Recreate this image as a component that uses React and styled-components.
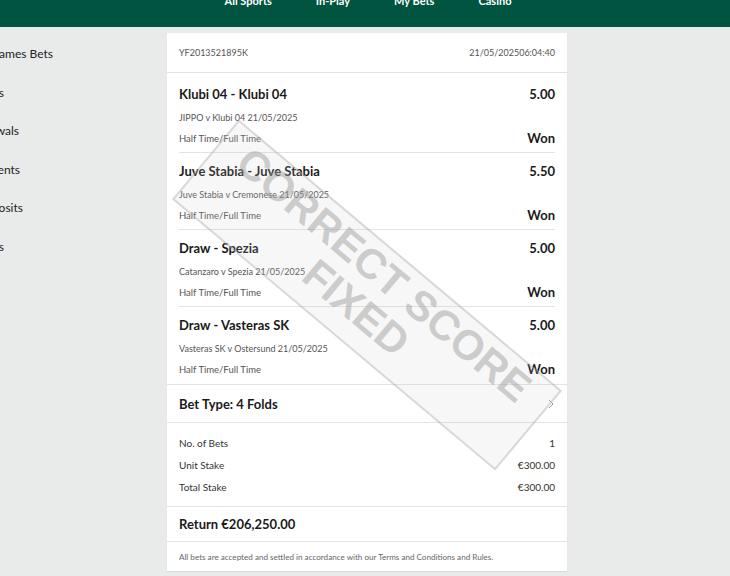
import React from "react";
import styled, { createGlobalStyle } from "styled-components";

const GlobalStyle = createGlobalStyle`
  html, body {
    margin: 0;
    padding: 0;
    background: #e9ebeb;
    font-family: Lato, "Open Sans", Arial, sans-serif;
    color: #222;
  }
`;

const Page = styled.div`
  width: 730px;
  height: 576px;
  overflow: hidden;
  background: #e9ebeb;
`;

const Header = styled.header`
  height: 27px;
  background: #005440;
  display: grid;
  grid-template-columns: 167px 400px 1fr;
  overflow: hidden;
`;

const Nav = styled.nav`
  grid-column: 2;
  display: flex;
  justify-content: center;
  gap: 44px;
  margin-top: -6px;
  padding-left: 2px;
`;

const NavLink = styled.span`
  color: #fff;
  font-weight: 700;
  font-size: 11px;
  line-height: 14px;
  white-space: nowrap;
`;

const Main = styled.div`
  display: grid;
  grid-template-columns: 167px 400px 1fr;
  padding-top: 6px;
`;

const Sidebar = styled.aside`
  overflow: hidden;
  padding-top: 14px;
  display: flex;
  flex-direction: column;
  gap: 24.5px;
`;

const SideItem = styled.div`
  width: ${(p) => p.$end}px;
  display: flex;
  justify-content: flex-end;
  font-size: 12px;
  line-height: 14px;
  color: #222;
  white-space: nowrap;
`;

const Card = styled.section`
  position: relative;
  background: #fff;
  box-shadow: 0 1px 1px rgba(0, 0, 0, 0.06);
  overflow: hidden;
`;

const CardHead = styled.div`
  height: 39px;
  padding: 0 12px;
  display: flex;
  align-items: center;
  justify-content: space-between;
  border-bottom: 1px solid #e3e3e3;
  font-size: 9px;
  color: #555;
`;

const Selections = styled.div`
  padding: 3px 12px 0;
  border-bottom: 1px solid #e3e3e3;
`;

const Selection = styled.div`
  padding-top: 11px;
  box-sizing: border-box;
  border-bottom: ${(p) => (p.$last ? "none" : "1px solid #e3e3e3")};
  height: ${(p) => (p.$last ? "77px" : "77px")};
`;

const Line = styled.div`
  display: flex;
  justify-content: space-between;
  align-items: center;
  height: 14px;
`;

const SubLine = styled(Line)`
  margin-top: ${(p) => p.$gap}px;
`;

const Title = styled.span`
  font-weight: 700;
  font-size: 13px;
  color: #1a1a1a;
`;

const Small = styled.span`
  font-size: ${(p) => p.$size || 9.5}px;
  color: #555;
`;

const BetType = styled.div`
  height: 37px;
  padding: 0 12px;
  display: flex;
  align-items: center;
  justify-content: space-between;
  border-bottom: 1px solid #e3e3e3;
`;

const Chevron = styled.svg`
  width: 8px;
  height: 10px;
`;

const Summary = styled.div`
  padding: 13px 12px 12px;
  display: flex;
  flex-direction: column;
  gap: 8px;
  border-bottom: 1px solid #e3e3e3;
`;

const SumRow = styled.div`
  display: flex;
  justify-content: space-between;
  align-items: center;
  height: 14px;
  font-size: 10px;
  color: #333;
`;

const Return = styled.div`
  height: 34px;
  padding: 0 12px;
  display: flex;
  align-items: center;
  border-bottom: 1px solid #e3e3e3;
`;

const Footer = styled.div`
  height: 29px;
  padding: 0 12px;
  display: flex;
  align-items: center;
  font-size: 8.1px;
  color: #666;
`;

const Stamp = styled.div`
  position: absolute;
  left: 200px;
  top: 262px;
  width: 422px;
  height: 104px;
  transform: translate(-50%, -50%) rotate(40deg);
  border: 2px solid rgba(170, 170, 170, 0.4);
  background: rgba(200, 200, 200, 0.15);
  display: flex;
  flex-direction: column;
  align-items: center;
  justify-content: center;
  padding-bottom: 10px;
  box-sizing: border-box;
  pointer-events: none;
`;

const StampText = styled.div`
  font-family: "Liberation Sans", Arial, sans-serif;
  font-weight: 700;
  font-size: 42px;
  line-height: 43px;
  color: rgba(150, 150, 150, 0.45);
  white-space: nowrap;
`;

const sideItems = [
  { label: "Casino Games Bets", end: 53 },
  { label: "Statements", end: 4 },
  { label: "Withdrawals", end: 19 },
  { label: "Adjustments", end: 20 },
  { label: "Deposits", end: 23 },
  { label: "Settings", end: 4 },
];

const selections = [
  { pick: "Klubi 04 - Klubi 04", odds: "5.00", event: "JIPPO v Klubi 04 21/05/2025" },
  { pick: "Juve Stabia - Juve Stabia", odds: "5.50", event: "Juve Stabia v Cremonese 21/05/2025" },
  { pick: "Draw - Spezia", odds: "5.00", event: "Catanzaro v Spezia 21/05/2025" },
  { pick: "Draw - Vasteras SK", odds: "5.00", event: "Vasteras SK v Ostersund 21/05/2025" },
];

export default function App() {
  return (
    <Page>
      <GlobalStyle />
      <Header>
        <Nav>
          <NavLink>All Sports</NavLink>
          <NavLink>In-Play</NavLink>
          <NavLink>My Bets</NavLink>
          <NavLink>Casino</NavLink>
        </Nav>
      </Header>
      <Main>
        <Sidebar>
          {sideItems.map((it) => (
            <SideItem key={it.label} $end={it.end}>
              <span>{it.label}</span>
            </SideItem>
          ))}
        </Sidebar>
        <Card>
          <CardHead>
            <span>YF2013521895K</span>
            <span>21/05/202506:04:40</span>
          </CardHead>
          <Selections>
            {selections.map((s, i) => (
              <Selection key={s.pick} $last={i === selections.length - 1}>
                <Line>
                  <Title>{s.pick}</Title>
                  <Title>{s.odds}</Title>
                </Line>
                <SubLine $gap={9}>
                  <Small $size={9}>{s.event}</Small>
                </SubLine>
                <SubLine $gap={7}>
                  <Small>Half Time/Full Time</Small>
                  <Title>Won</Title>
                </SubLine>
              </Selection>
            ))}
          </Selections>
          <BetType>
            <Title>Bet Type: 4 Folds</Title>
            <Chevron viewBox="0 0 8 10">
              <path d="M2 1l4 4-4 4" fill="none" stroke="#999" strokeWidth="1" />
            </Chevron>
          </BetType>
          <Summary>
            <SumRow>
              <span>No. of Bets</span>
              <span>1</span>
            </SumRow>
            <SumRow>
              <span>Unit Stake</span>
              <span>€300.00</span>
            </SumRow>
            <SumRow>
              <span>Total Stake</span>
              <span>€300.00</span>
            </SumRow>
          </Summary>
          <Return>
            <Title>Return €206,250.00</Title>
          </Return>
          <Footer>
            All bets are accepted and settled in accordance with our Terms and Conditions and Rules.
          </Footer>
          <Stamp>
            <StampText>CORRECT SCORE</StampText>
            <StampText>FIXED</StampText>
          </Stamp>
        </Card>
      </Main>
    </Page>
  );
}
